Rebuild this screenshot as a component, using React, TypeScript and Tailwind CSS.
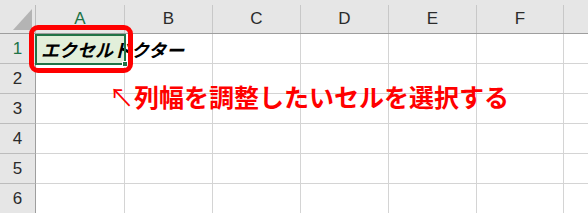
import React from "react";

const cols = ["A", "B", "C", "D", "E", "F", ""];
const rows = [1, 2, 3, 4, 5, 6];

export default function App() {
  return (
    <div className="relative w-[588px] h-[213px] overflow-hidden bg-white" style={{ fontFamily: '"Liberation Sans", Arial, sans-serif' }}>
      <div className="grid grid-cols-[36px_89px_88px_88px_88px_88px_87px_1fr] grid-rows-[34px_30px_30px_30px_30px_30px_30px]">
        {/* corner */}
        <div className="relative bg-[#e6e6e6] border-b border-[#9e9e9e] flex">
          <div className="flex-1 relative">
            <svg className="absolute left-0 top-0" width="35" height="33" viewBox="0 0 35 33">
              <polygon points="13,30 32,30 32,9" fill="#b4b4b4" />
            </svg>
          </div>
          <div className="w-px mt-[5px] bg-[#bcbcbc]" />
        </div>
        {cols.map((c, i) => (
          <div key={c + i} className="bg-[#e6e6e6] border-b border-[#9e9e9e] flex">
            <div className={`flex-1 flex items-center justify-center pt-[5px] text-[17px] ${i === 0 ? "text-[#217346]" : "text-[#2b2b2b]"}`}>
              {c}
            </div>
            {i < 6 && <div className="w-px mt-[5px] bg-[#c8c8c8]" />}
          </div>
        ))}
        {rows.map((r) => (
          <React.Fragment key={r}>
            <div className={`bg-[#e6e6e6] border-r border-[#9e9e9e] border-b border-b-[#bcbcbc] flex items-center justify-center text-[17px] ${r === 1 ? "text-[#217346]" : "text-[#2b2b2b]"}`}>
              {r}
            </div>
            {cols.map((c, i) => (
              <div
                key={c + i}
                className={`border-b border-[#d4d4d4] ${i < 6 ? "border-r" : ""} ${r === 1 && i === 0 ? "bg-[#e2efda] relative overflow-visible z-10" : ""}`}
              >
                {r === 1 && i === 0 && (
                  <div
                    className="absolute left-[5px] top-0 h-full flex items-center whitespace-nowrap text-[18px] font-bold italic text-black leading-none"
                    style={{ fontFamily: '"Noto Sans CJK JP", sans-serif' }}
                  >
                    エクセルドクター
                  </div>
                )}
              </div>
            ))}
          </React.Fragment>
        ))}
      </div>

      {/* selection border */}
      <div className="absolute left-[35px] top-[34px] w-[91px] h-[31px] border-2 border-[#217346] z-20" />
      <div className="absolute left-[122px] top-[61px] w-[6px] h-[6px] bg-[#217346] border border-white z-20" />
      {/* red highlight */}
      <div className="absolute left-[29px] top-[25px] w-[104px] h-[48px] border-[5px] border-[#ff0000] rounded-[9px] z-30" />

      {/* annotation */}
      <div
        className="absolute left-[109px] top-[84px] whitespace-nowrap text-[25px] leading-[25px] font-bold text-[#ff0000] z-30"
        style={{ fontFamily: '"Noto Sans CJK JP", sans-serif' }}
      >
        <span className="font-normal">↖</span>列幅を調整したいセルを選択する
      </div>
    </div>
  );
}
